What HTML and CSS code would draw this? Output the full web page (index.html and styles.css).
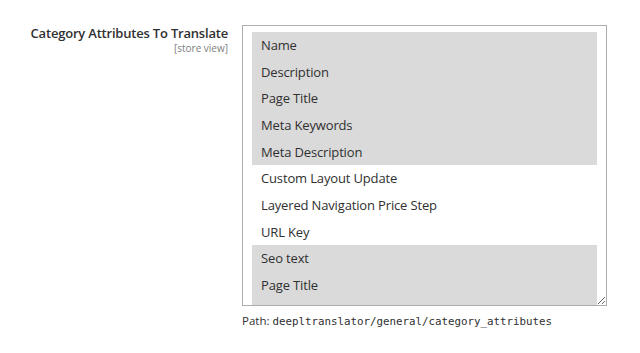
FILE: index.html
```html
<!DOCTYPE html>
<html lang="en">
<head>
    <meta charset="UTF-8">
    <meta name="viewport" content="width=device-width, initial-scale=1.0">
    <title>DeepL Translator - Category Attributes</title>
    <link rel="stylesheet" href="styles.css">
</head>
<body>
    <div class="field">
        <div class="field-label">
            <span class="label-text">Category Attributes To Translate</span>
            <span class="scope">[store view]</span>
        </div>
        <div class="field-control">
            <div class="multiselect">
                <div class="option selected">Name</div>
                <div class="option selected">Description</div>
                <div class="option selected">Page Title</div>
                <div class="option selected">Meta Keywords</div>
                <div class="option selected">Meta Description</div>
                <div class="option">Custom Layout Update</div>
                <div class="option">Layered Navigation Price Step</div>
                <div class="option">URL Key</div>
                <div class="option selected">Seo text</div>
                <div class="option selected">Page Title</div>
                <div class="option-more"></div>
            </div>
            <p class="note">Path: <code>deepltranslator/general/category_attributes</code></p>
        </div>
    </div>
</body>
</html>
```

FILE: styles.css
```css
body {
    margin: 0;
    background: #fff;
    font-family: 'Open Sans', sans-serif;
    color: #303030;
}
.field {
    display: flex;
    gap: 14px;
    padding-top: 25px;
}
.field-label {
    width: 228px;
    display: flex;
    flex-direction: column;
    align-items: flex-end;
}
.label-text {
    font-size: 13px;
    font-weight: 600;
    letter-spacing: -0.2px;
    line-height: 17px;
    color: #303030;
}
.scope {
    font-size: 10px;
    line-height: 13px;
    color: #808080;
}
.multiselect {
    width: 345px;
    height: 273px;
    padding: 6px 9px 0;
    border: 1px solid #adadad;
    overflow: hidden;
    resize: both;
}
.option {
    height: 26.67px;
    line-height: 26.67px;
    padding-left: 9px;
    font-size: 13px;
    letter-spacing: -0.15px;
    color: #303030;
    white-space: nowrap;
}
.option.selected {
    background: #dadada;
}
.option-more {
    height: 12px;
    background: #dadada;
}
.note {
    margin: 7px 0 0;
    font-size: 11.5px;
    color: #303030;
}
.note code {
    font-family: 'DejaVu Sans Mono', monospace;
    font-size: 10.8px;
}
```
